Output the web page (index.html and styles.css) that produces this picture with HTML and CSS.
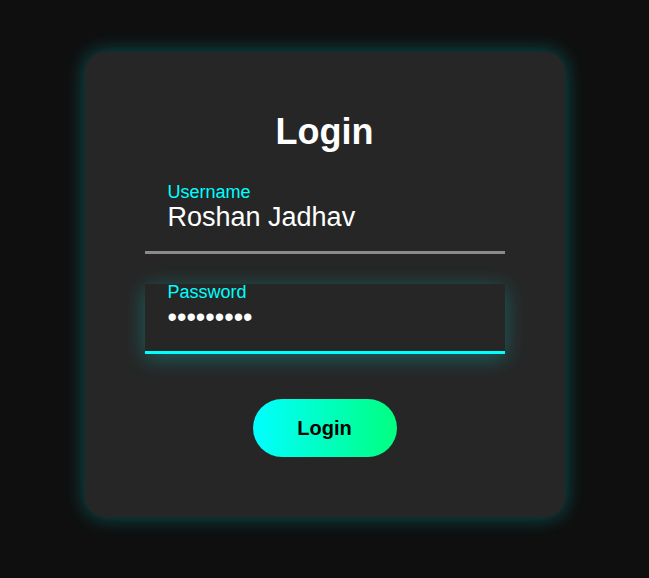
FILE: index.html
```html
<!DOCTYPE html>
<html lang="en">
<head>
<meta charset="utf-8">
<title>Login</title>
<link rel="stylesheet" href="styles.css">
</head>
<body>
  <form class="card" onsubmit="return false">
    <h2 class="title">Login</h2>
    <div class="field">
      <label class="field-label" for="user">Username</label>
      <input class="field-input" id="user" type="text" value="Roshan Jadhav">
    </div>
    <div class="field field-active">
      <label class="field-label" for="pass">Password</label>
      <input class="field-input" id="pass" type="password" value="123456789">
    </div>
    <button class="btn" type="submit">Login</button>
  </form>
</body>
</html>
```
FILE: styles.css
```css
* { box-sizing: border-box; }
html, body { margin: 0; padding: 0; }
body {
  background: #0f0f0f;
  min-height: 578px;
  padding-top: 52px;
  font-family: "Liberation Sans", Arial, sans-serif;
}
.card {
  width: 480px;
  margin: 0 auto;
  padding: 59px 60px 60px;
  background: #262626;
  border-radius: 20px;
  box-shadow: 0 0 20px rgba(0, 255, 255, 0.3);
  display: flex;
  flex-direction: column;
}
.title {
  margin: 0 0 31px;
  font-size: 36px;
  line-height: 42px;
  font-weight: bold;
  color: #fff;
  text-align: center;
}
.field {
  height: 70px;
  padding: 0 22px 0 23px;
  border-bottom: 3px solid #8a8a8a;
  display: flex;
  flex-direction: column;
}
.field + .field { margin-top: 30px; }
.field-active {
  border-bottom-color: #00ffff;
  box-shadow: 0 4px 20px rgba(0, 255, 255, 0.28);
}
.field-label {
  font-size: 18px;
  line-height: 16px;
  color: #00ffff;
}
.field-input {
  margin: 2px 0 0;
  padding: 0;
  border: 0;
  outline: none;
  background: transparent;
  color: #fff;
  font-family: "Liberation Sans", Arial, sans-serif;
  font-size: 27px;
  line-height: 30px;
  height: 30px;
  width: 100%;
}
.btn {
  margin: 45px auto 0;
  width: 144px;
  height: 58px;
  border: 0;
  border-radius: 29px;
  background: linear-gradient(to right, #00ffff, #00ff80);
  color: #000;
  font-family: "Liberation Sans", Arial, sans-serif;
  font-size: 20px;
  font-weight: bold;
  cursor: pointer;
}
```
